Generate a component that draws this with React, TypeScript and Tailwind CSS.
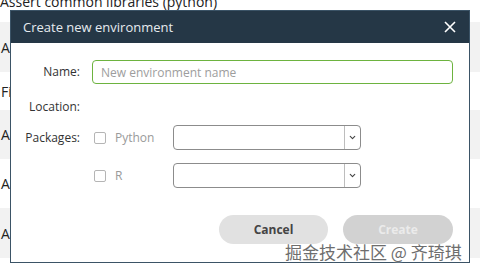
import { ChevronDown } from 'lucide-react';

const rows = [
  { h: 'h-[50px]', bg: 'bg-[#f2f2f2]', label: 'Assert numpy basics' },
  { h: 'h-[38px]', bg: 'bg-white', label: 'Find missing values' },
  { h: 'h-[49px]', bg: 'bg-[#f2f2f2]', label: 'Assert dataframe shape' },
  { h: 'h-[49px]', bg: 'bg-white', label: 'Assert column types' },
  { h: 'h-[50px]', bg: 'bg-[#f2f2f2]', label: 'Aiohttp client checks' },
];

function Select() {
  return (
    <div className="w-[188px] h-[25px] flex border border-[#8c8c8c] rounded-[4px] bg-white">
      <div className="flex-1" />
      <div className="w-[16px] border-l border-[#bdbdbd] flex items-center justify-center">
        <ChevronDown size={9} strokeWidth={3} className="text-[#444]" />
      </div>
    </div>
  );
}

function PkgRow({ name }: { name: string }) {
  return (
    <div className="flex items-center">
      <label className="w-[81px] flex items-center pl-[2px]">
        <span className="shrink-0 w-[12px] h-[12px] border border-[#b5b5b5] rounded-[2px] bg-white" />
        <span className="ml-[9px] text-[12px] leading-[14px] text-[#9a9a9a]">{name}</span>
      </label>
      <Select />
    </div>
  );
}

export default function App() {
  return (
    <div className="relative w-[480px] h-[273px] overflow-hidden bg-white font-['Open_Sans',sans-serif]">

      {/* Background list */}
      <div className="flex flex-col">
        <div className="h-[22px] flex items-start">
          <p className="-mt-[9px] text-[14px] text-[#222]">Assert common libraries (python)</p>
        </div>
        {rows.map(r => (
          <div key={r.label} className={`${r.h} ${r.bg} flex items-center text-[14px] text-[#222] pl-[1px]`}>
            {r.label}
          </div>
        ))}
      </div>

      {/* Dialog */}
      <div className="absolute left-[10px] top-[10px] w-[460px] h-[253px] border border-[#3b5366] bg-white flex flex-col">
        <div className="h-[32px] bg-[#253746] flex items-center justify-between pl-[12px] pr-[13px]">
          <span className="text-[13px] text-[#e6ebef] mt-[1px]">Create new environment</span>
          <svg width="12" height="12" viewBox="0 0 12 12" className="text-white">
            <path d="M1 1L11 11M11 1L1 11" stroke="currentColor" strokeWidth="1.6" />
          </svg>
        </div>

        <div className="flex flex-col pt-[17px] pr-[16px] text-[12px] leading-[14px] text-[#333]">
          <div className="flex items-center h-[24px]">
            <span className="w-[69px] text-right">Name:</span>
            <input
              placeholder="New environment name"
              className="ml-[12px] flex-1 h-[24px] border border-[#6db33f] rounded-[4px] px-[8px] text-[12px] outline-none placeholder-[#9d9d9d]"
            />
          </div>

          <div className="flex items-center h-[20px] mt-[13px]">
            <span className="w-[69px] text-right">Location:</span>
          </div>

          <div className="flex items-center mt-[8px]">
            <span className="w-[69px] text-right">Packages:</span>
            <div className="ml-[12px]"><PkgRow name="Python" /></div>
          </div>

          <div className="flex items-center mt-[13px]">
            <div className="ml-[81px]"><PkgRow name="R" /></div>
          </div>

          <div className="flex justify-end gap-[15px] mt-[27px]">
            <button className="w-[109px] h-[29px] rounded-full bg-[#e1e1e1] text-[12px] font-bold text-[#444]">Cancel</button>
            <button className="w-[110px] h-[29px] rounded-full bg-[#d2d2d2] text-[12px] font-bold text-[#ebebeb]">Create</button>
          </div>
        </div>
      </div>

      {/* Watermark */}
      <div className="absolute left-[285px] top-[241px] text-[17px] leading-[22px] text-[#6e6e6e] font-['Noto_Sans_CJK_SC',sans-serif] [text-shadow:0_0_2px_#fff]">
        掘金技术社区 @ 齐琦琪
      </div>
    </div>
  );
}
